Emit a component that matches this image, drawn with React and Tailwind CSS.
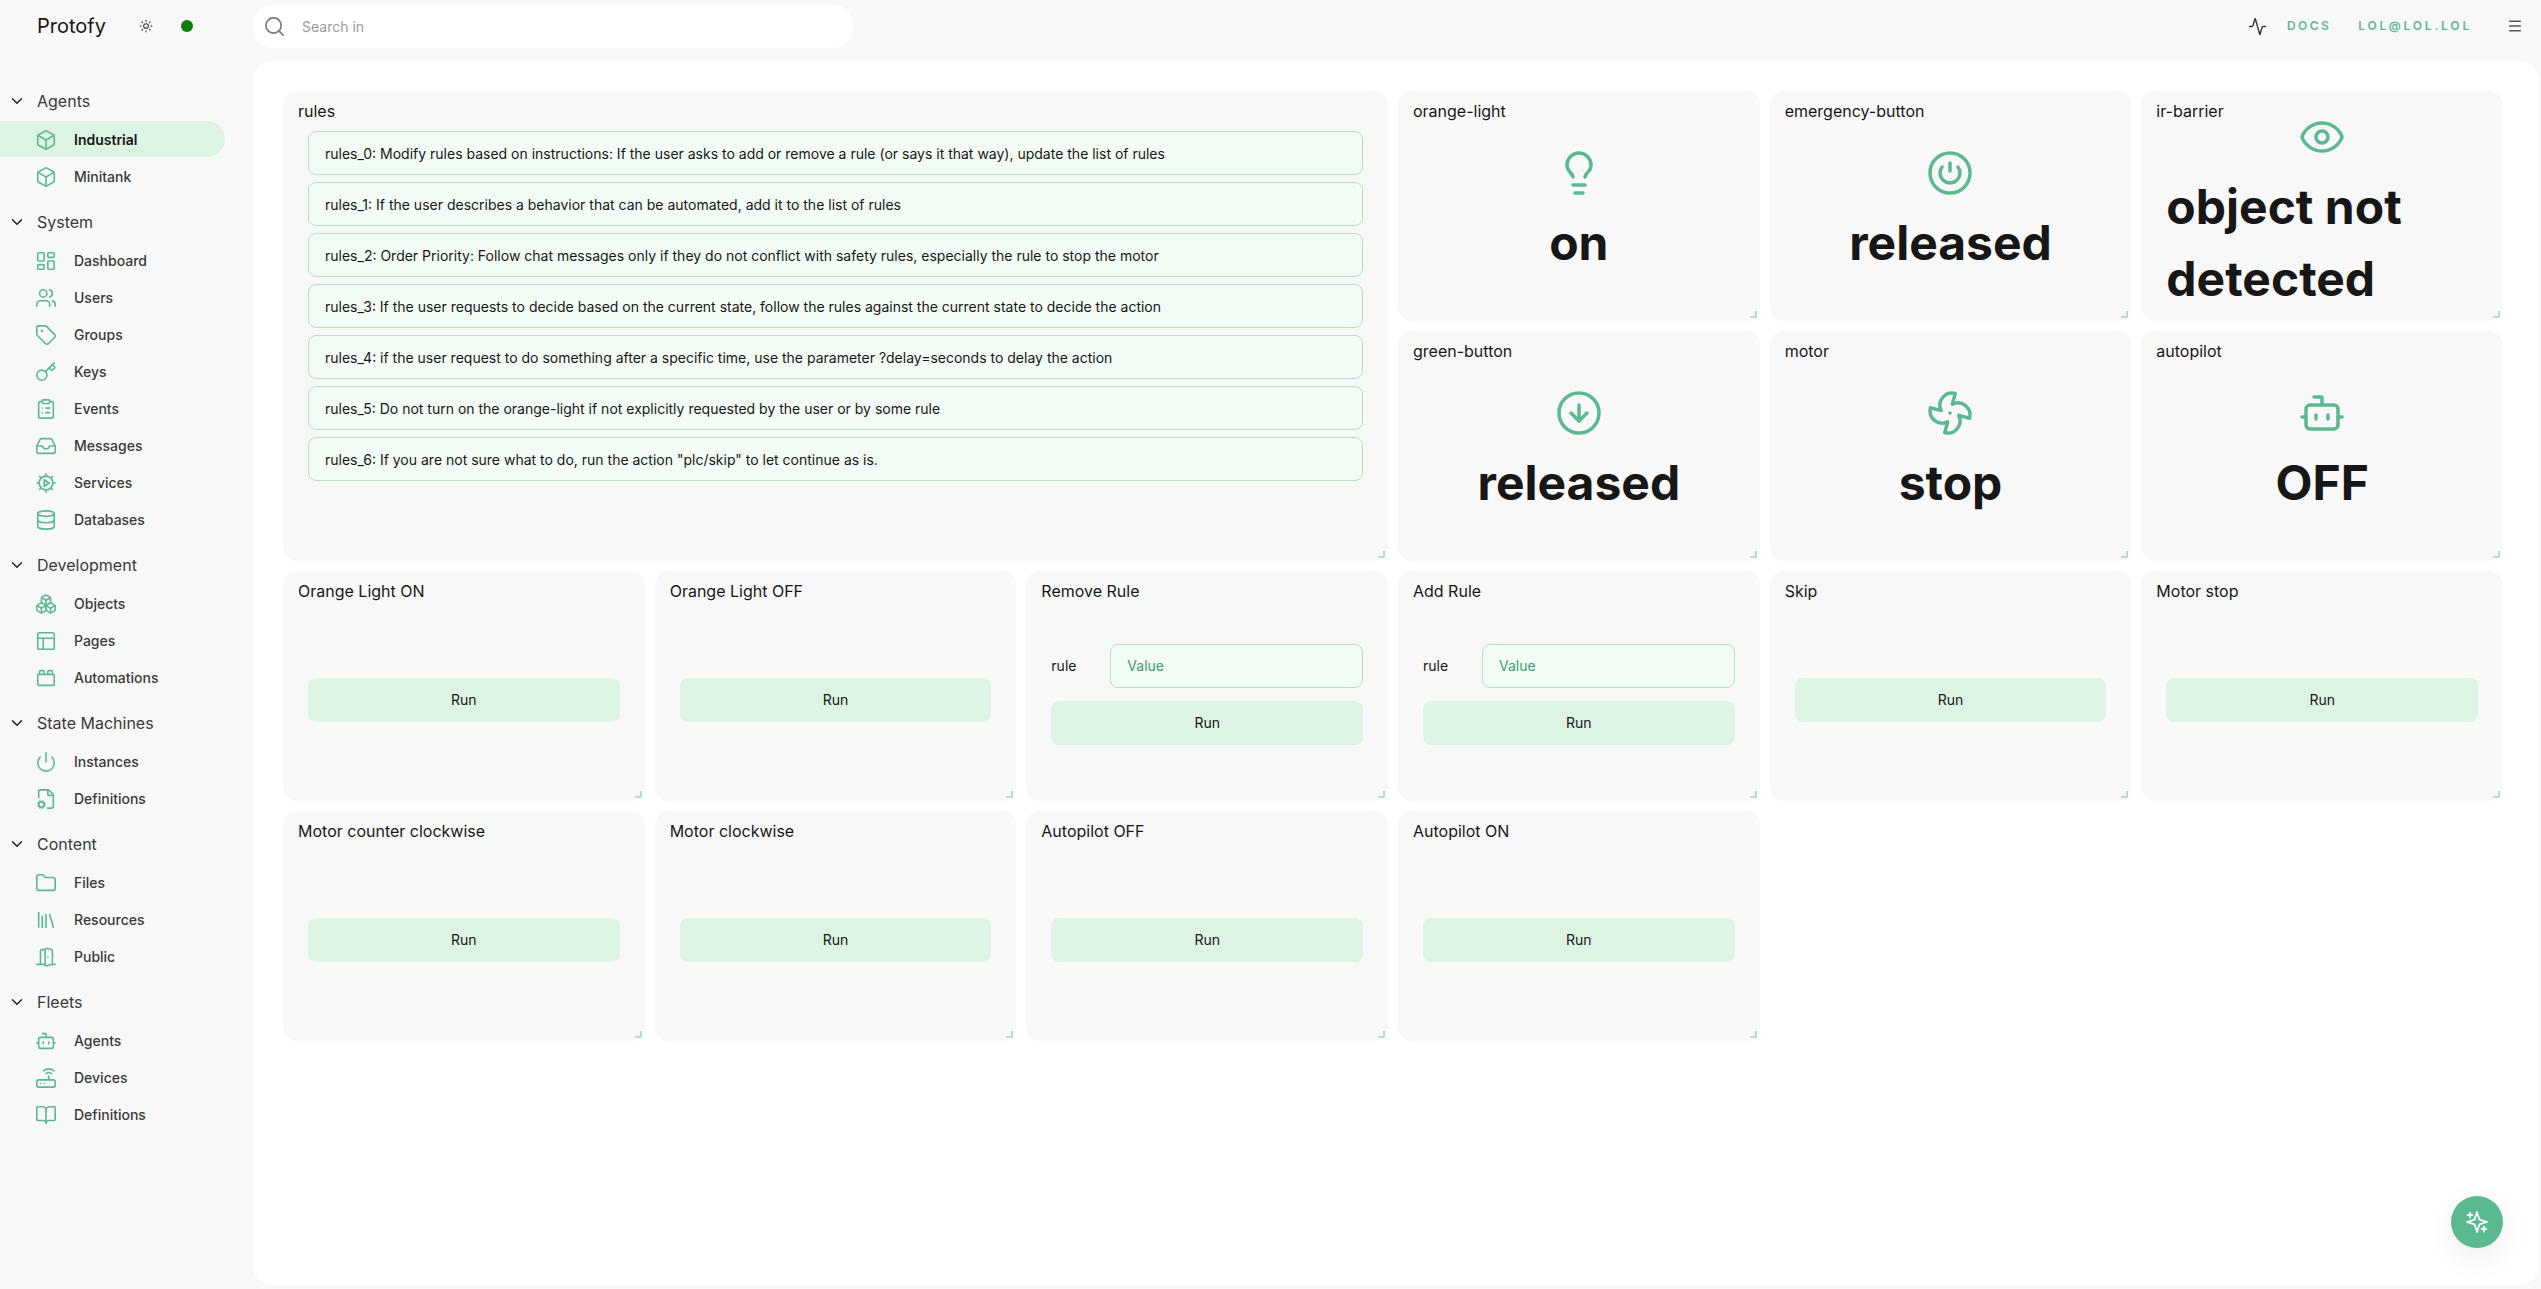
import React from 'react';
import {
  Activity, Bot, BookOpen, Box, Boxes, ChevronDown, CircleArrowDown, CirclePower, ClipboardList,
  Database, DoorOpen, Eye, Fan, FileCog, Folder, Inbox, Key, LayoutDashboard, Library, Lightbulb,
  Menu, PanelsTopLeft, Power, Router, Search, Sun, Tag, ToyBrick, Users,
} from 'lucide-react';

// gear with a play triangle, lucide has no such icon
const ServiceIcon = ({ className, strokeWidth }) => (
  <svg className={className} viewBox="0 0 24 24" fill="none" stroke="currentColor" strokeWidth={strokeWidth} strokeLinecap="round" strokeLinejoin="round">
    <circle cx="12" cy="12" r="7.5" />
    <path d="M12 2v2.5M12 19.500V22M2 12h2.500M19.500 12H22M4.900 4.900l1.800 1.800M17.300 17.300l1.800 1.800M4.900 19.100l1.800-1.800M17.300 6.700l1.800-1.800" />
    <path d="M10 8.500v7l5.500-3.500z" />
  </svg>
);

const AssistantIcon = () => (
  <svg className="w-7 h-7 text-white" viewBox="0 0 28 28" fill="none" stroke="currentColor" strokeWidth="1.75" strokeLinecap="round" strokeLinejoin="round">
    <path d="M14 4l2.400 7.600 7.600 2.400-7.600 2.400-2.400 7.600-2.400-7.600-7.600-2.400 7.600-2.400z" />
    <path d="M7 4.500v5M4.500 7h5M21 18.500v5M18.500 21h5" />
  </svg>
);

const NAV = [
  { title: 'Agents', items: [['Industrial', Box, true], ['Minitank', Box]] },
  {
    title: 'System',
    items: [
      ['Dashboard', LayoutDashboard], ['Users', Users], ['Groups', Tag], ['Keys', Key],
      ['Events', ClipboardList], ['Messages', Inbox], ['Services', ServiceIcon], ['Databases', Database],
    ],
  },
  { title: 'Development', items: [['Objects', Boxes], ['Pages', PanelsTopLeft], ['Automations', ToyBrick]] },
  { title: 'State Machines', items: [['Instances', Power], ['Definitions', FileCog]] },
  { title: 'Content', items: [['Files', Folder], ['Resources', Library], ['Public', DoorOpen]] },
  { title: 'Fleets', items: [['Agents', Bot], ['Devices', Router], ['Definitions', BookOpen]] },
];

const RULES = [
  'rules_0: Modify rules based on instructions: If the user asks to add or remove a rule (or says it that way), update the list of rules',
  'rules_1: If the user describes a behavior that can be automated, add it to the list of rules',
  'rules_2: Order Priority: Follow chat messages only if they do not conflict with safety rules, especially the rule to stop the motor',
  'rules_3: If the user requests to decide based on the current state, follow the rules against the current state to decide the action',
  'rules_4: if the user request to do something after a specific time, use the parameter ?delay=seconds to delay the action',
  'rules_5: Do not turn on the orange-light if not explicitly requested by the user or by some rule',
  'rules_6: If you are not sure what to do, run the action "plc/skip" to let continue as is.',
];

const ResizeHandle = () => (
  <svg className="absolute right-[3px] bottom-[3px] w-[7px] h-[7px] text-[#9fd6b6]" viewBox="0 0 7 7" fill="none" stroke="currentColor" strokeWidth="1.5">
    <path d="M6 0v6H0" />
  </svg>
);

const Card = ({ title, className = '', children }) => (
  <div className={`relative flex flex-col bg-[#f8f8f8] rounded-[14px] pt-2 ${className}`}>
    <div className="px-[15px] h-6 text-base leading-6 text-[#171717]">{title}</div>
    {children}
    <ResizeHandle />
  </div>
);

const ValueCard = ({ title, icon: Icon, value }) => (
  <Card title={title}>
    <div className="flex-1 min-h-0 mb-4 px-[25px] flex flex-col items-center justify-center">
      <Icon className="w-12 h-12 shrink-0 text-[#5bb98f] mb-[10px]" strokeWidth={1.75} />
      <div className="text-5xl leading-[72px] font-bold text-[#171717]">{value}</div>
    </div>
  </Card>
);

const RunButton = () => (
  <div className="h-11 rounded-lg bg-[#ddf3e4] flex items-center justify-center text-sm text-[#171717]">Run</div>
);

const ActionCard = ({ title, input }) => (
  <Card title={title}>
    <div className="flex-1 min-h-0 mb-4 px-[25px] flex flex-col justify-center">
      {input ? (
        <>
          <div className="flex items-center mb-[13px]">
            <span className="w-[59px] text-sm text-[#171717]">rule</span>
            <div className="flex-1 h-11 rounded-lg border border-[#b5e0c6] bg-[#f3fbf5] pl-4 flex items-center text-sm text-[#3f9e77]">Value</div>
          </div>
          <RunButton />
        </>
      ) : (
        <div className="pt-3"><RunButton /></div>
      )}
    </div>
  </Card>
);

const Sidebar = () => (
  <aside className="w-[253px] shrink-0 pt-7">
    {NAV.map(section => (
      <div key={section.title} className="mb-4">
        <div className="flex items-center h-6 mb-2 text-base text-[#3a3a3a]">
          <ChevronDown className="w-[18px] h-[18px] ml-2 mr-[11px] text-[#222]" strokeWidth={2} />
          {section.title}
        </div>
        <div className="flex flex-col gap-px">
          {section.items.map(([label, Icon, active]) => (
            <div
              key={label}
              className={`flex items-center h-9 w-[225px] pl-[35px] pt-[2px] rounded-r-full text-sm ${active ? 'bg-[#ddf3e4] font-semibold text-[#171717]' : 'font-medium text-[#3a3a3a]'}`}
            >
              <Icon className="w-[22px] h-[22px] mr-[17px] text-[#5bb98f]" strokeWidth={1.75} />
              {label}
            </div>
          ))}
        </div>
      </div>
    ))}
  </aside>
);

export default function App() {
  return (
    <div className="relative h-screen overflow-hidden flex flex-col bg-[#f8f8f8] font-['Inter',sans-serif]">
      {/* Top bar */}
      <header className="h-[61px] shrink-0 flex items-start">
        <div className="w-[253px] shrink-0 h-[52px] flex items-center pl-[37px]">
          <span className="text-xl text-[#171717] w-[102px]">Protofy</span>
          <Sun className="w-[14px] h-[14px] text-[#333]" strokeWidth={1.75} />
          <span className="w-3 h-3 rounded-full bg-[#0b7d0b] ml-[28px]" />
        </div>
        <div className="mt-[5px] w-[600px] h-[43px] rounded-[20px] bg-white flex items-center pl-[10px]">
          <Search className="w-[23px] h-[23px] text-[#7a7a7a]" strokeWidth={1.75} />
          <span className="ml-[16px] text-sm text-[#9a9a9a]">Search in</span>
        </div>
        <div className="ml-auto h-[52px] flex items-center pr-[18px]">
          <Activity className="w-[19px] h-[19px] text-[#333]" strokeWidth={1.75} />
          <span className="ml-[20px] text-xs font-semibold tracking-[0.2em] text-[#5bb98f]">DOCS</span>
          <span className="ml-[27px] text-xs font-semibold tracking-[0.235em] text-[#5bb98f]">LOL@LOL.LOL</span>
          <Menu className="ml-[35px] w-4 h-4 text-[#555]" strokeWidth={2.25} />
        </div>
      </header>

      <div className="flex-1 flex min-h-0">
        <Sidebar />
        <main className="flex-1 mr-[2px] mb-1 bg-white rounded-[20px] pt-[30px] pl-[30px] pr-[36px]">
          <div className="grid grid-cols-6 auto-rows-[230px] gap-[10px]">
            <Card title="rules" className="col-span-3 row-span-2">
              <div className="mt-2 px-[25px] flex flex-col gap-[7px]">
                {RULES.map(rule => (
                  <div key={rule} className="h-11 rounded-lg border border-[#b5e0c6] bg-[#f3fbf5] pl-4 pt-[2px] flex items-center text-sm text-[#171717]">
                    {rule}
                  </div>
                ))}
              </div>
            </Card>
            <ValueCard title="orange-light" icon={Lightbulb} value="on" />
            <ValueCard title="emergency-button" icon={CirclePower} value="released" />
            <ValueCard title="ir-barrier" icon={Eye} value="object not detected" />
            <ValueCard title="green-button" icon={CircleArrowDown} value="released" />
            <ValueCard title="motor" icon={Fan} value="stop" />
            <ValueCard title="autopilot" icon={Bot} value="OFF" />
            <ActionCard title="Orange Light ON" />
            <ActionCard title="Orange Light OFF" />
            <ActionCard title="Remove Rule" input />
            <ActionCard title="Add Rule" input />
            <ActionCard title="Skip" />
            <ActionCard title="Motor stop" />
            <ActionCard title="Motor counter clockwise" />
            <ActionCard title="Motor clockwise" />
            <ActionCard title="Autopilot OFF" />
            <ActionCard title="Autopilot ON" />
          </div>
        </main>
      </div>

      {/* Floating assistant button */}
      <button className="absolute right-[38px] bottom-[41px] w-[52px] h-[52px] rounded-full bg-[#5bb98f] flex items-center justify-center shadow-[0_10px_30px_rgba(0,0,0,0.08)]">
        <AssistantIcon />
      </button>
    </div>
  );
}
